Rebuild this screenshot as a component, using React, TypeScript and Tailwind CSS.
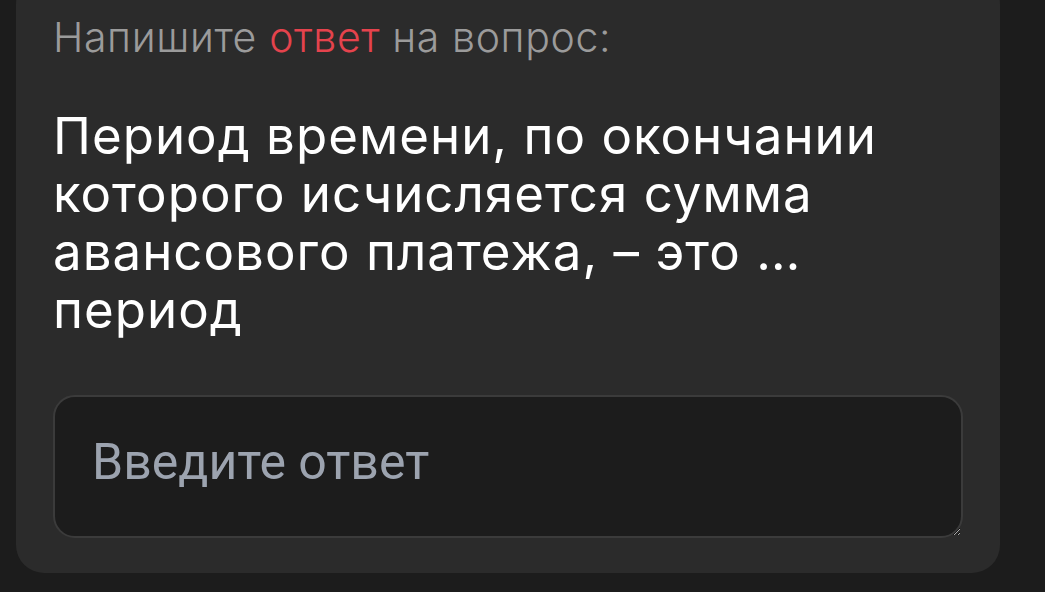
import React, { useState } from "react";

export default function App() {
  const [answer, setAnswer] = useState("");

  return (
    <div className="min-h-screen w-full bg-[#1c1c1c] overflow-hidden">
      <div className="ml-4 mr-[45px] -mt-6 rounded-[28px] bg-[#2b2b2b] px-[37px] pt-[37px] pb-[35px]">
        <p
          className="text-[41px] leading-[48px] font-light tracking-[0.015em] text-[#9b9b9b]"
          style={{ fontFamily: "Inter, 'Noto Sans', sans-serif" }}
        >
          Напишите <span className="text-[#e5434d]">ответ</span> на вопрос:
        </p>
        <h2
          className="mt-[46px] text-[51px] leading-[58px] font-normal tracking-[0.02em] text-white"
          style={{ fontFamily: "Inter, 'Noto Sans', sans-serif" }}
        >
          Период времени, по окончании которого исчисляется сумма авансового
          платежа, – это … период
        </h2>
        <textarea
          value={answer}
          onChange={(e) => setAnswer(e.target.value)}
          placeholder="Введите ответ"
          className="mt-[56px] block h-[143px] w-full rounded-[22px] border-2 border-[#3b3b3b] bg-[#1c1c1c] px-[37px] pt-[36px] text-[50px] leading-[58px] text-white placeholder:text-[#9ca3af] outline-none"
          style={{ fontFamily: "Roboto, sans-serif" }}
        />
      </div>
    </div>
  );
}
